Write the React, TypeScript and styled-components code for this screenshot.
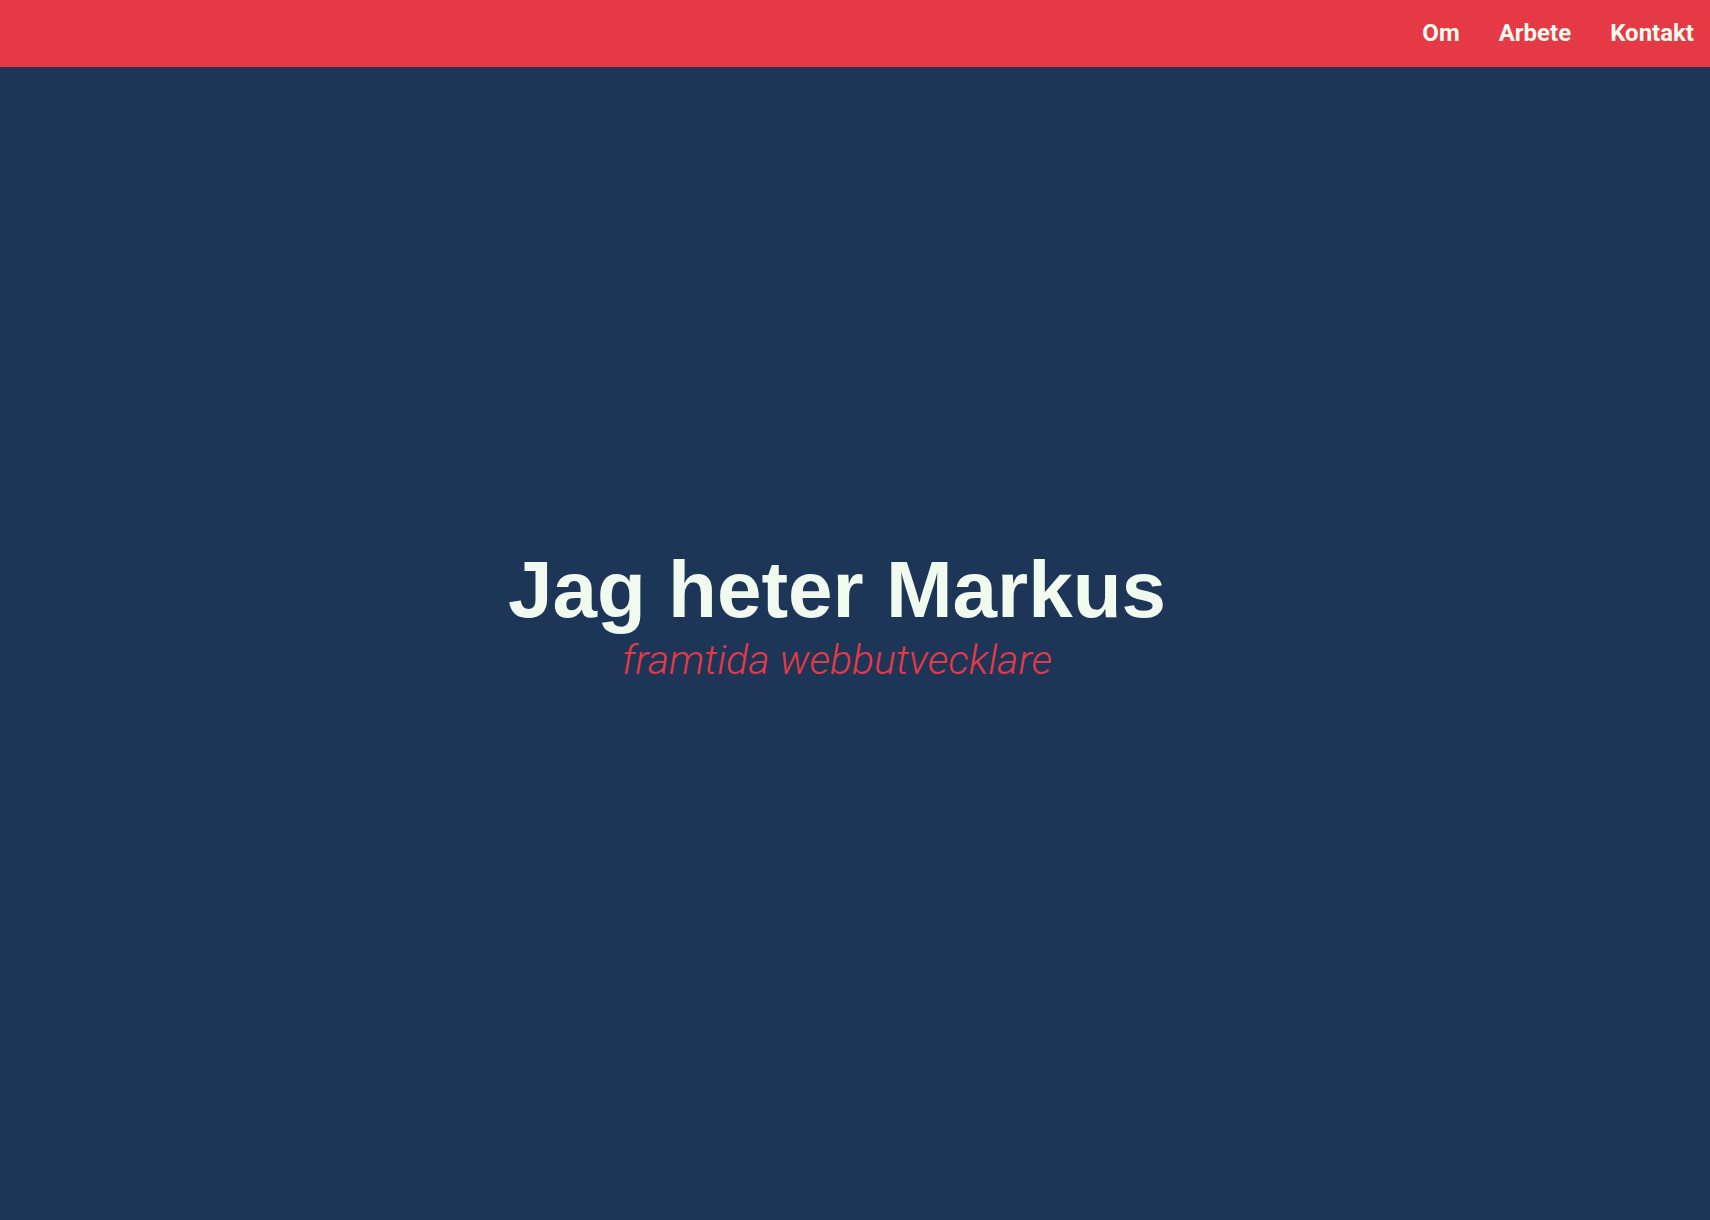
import React from "react";
import styled, { createGlobalStyle } from "styled-components";

const GlobalStyle = createGlobalStyle`
  html, body {
    margin: 0;
    padding: 0;
    background: #1d3557;
  }
  * { box-sizing: border-box; }
`;

const Page = styled.div`
  min-height: 100vh;
  display: flex;
  flex-direction: column;
  background: #1d3557;
`;

const Header = styled.header`
  position: fixed;
  top: 0;
  left: 0;
  right: 0;
  height: 67px;
  background: #e63946;
  display: flex;
  align-items: center;
  justify-content: flex-end;
  padding: 0 16px 2px 0;
  z-index: 10;
`;

const Nav = styled.nav`
  display: flex;
  align-items: center;
  gap: 39px;
`;

const NavLink = styled.a`
  font-family: Roboto, "Noto Sans", sans-serif;
  font-weight: 700;
  font-size: 24px;
  color: #f1faee;
  text-decoration: none;
`;

const Hero = styled.section`
  height: 100vh;
  display: flex;
  flex-direction: column;
  align-items: center;
  justify-content: center;
  padding: 8px 36px 0 0;
  text-align: center;
`;

const Title = styled.h1`
  margin: 0;
  font-family: "Liberation Sans", Arial, sans-serif;
  font-weight: 700;
  font-size: 80px;
  color: #f1faee;
`;

const Subtitle = styled.p`
  margin: 0;
  font-family: Roboto, "Noto Sans", sans-serif;
  font-weight: 300;
  font-style: italic;
  font-size: 41px;
  color: #e63946;
`;

export default function App() {
  return (
    <>
      <GlobalStyle />
      <Page>
        <Header>
          <Nav>
            <NavLink href="#om">Om</NavLink>
            <NavLink href="#arbete">Arbete</NavLink>
            <NavLink href="#kontakt">Kontakt</NavLink>
          </Nav>
        </Header>
        <Hero>
          <Title>Jag heter Markus</Title>
          <Subtitle>framtida webbutvecklare</Subtitle>
        </Hero>
      </Page>
    </>
  );
}
